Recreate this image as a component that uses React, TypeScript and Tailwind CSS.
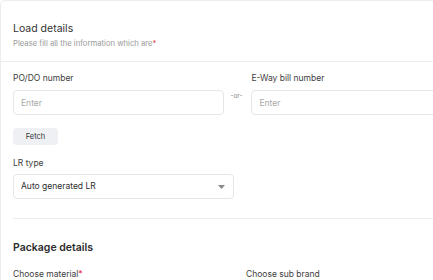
function Label({ text, required }: { text: string; required?: boolean }) {
  return (
    <div className="text-[8.5px] leading-[12px] text-[#3d3d3d]">
      {text}
      {required && <span className="text-[#e5383b]">*</span>}
    </div>
  );
}

export default function App() {
  return (
    <div className="w-[433px] h-[280px] overflow-hidden bg-white" style={{ fontFamily: "Inter, sans-serif" }}>
      <div className="w-[480px] border border-[#ececec] rounded-tl-[5px]">
        <div className="px-3 pt-[21px] pb-[11px] border-b border-[#ececec]">
          <h1 className="text-[10.5px] leading-[14px] text-[#333]">Load details</h1>
          <p className="mt-[2px] text-[7.7px] leading-[12px] text-[#9a9a9a]">
            Please fill all the information which are<span className="text-[#e5383b]">*</span>
          </p>
        </div>

        <div className="px-3 pt-[10px]">
          <div className="flex items-start">
            <div className="w-[213px]">
              <Label text="PO/DO number" />
              <input
                placeholder="Enter"
                className="mt-[6px] w-full h-[25px] px-[7px] rounded-[4px] border border-[#e6e6e6] text-[8.5px] placeholder:text-[#a8a8a8] outline-none"
              />
            </div>
            <div className="w-[26px] pt-[19px] text-center text-[6.5px] leading-[10px] text-[#888]">-or-</div>
            <div className="w-[220px] pl-[2px]">
              <Label text="E-Way bill number" />
              <input
                placeholder="Enter"
                className="mt-[6px] w-full h-[25px] px-[7px] rounded-[4px] border border-[#e6e6e6] text-[8.5px] placeholder:text-[#a8a8a8] outline-none"
              />
            </div>
          </div>

          <button className="mt-[13px] w-[45px] h-[17px] rounded-[4px] bg-[#eef0f3] text-[7.5px] text-[#333]">Fetch</button>

          <div className="mt-[12px] grid grid-cols-2 gap-x-3">
            <div>
              <Label text="LR type" />
              <div className="mt-[5px] h-[25px] flex items-center justify-between pl-[7px] pr-[8px] rounded-[4px] border border-[#e6e6e6]">
                <span className="text-[8.5px] text-[#2e2e2e]">Auto generated LR</span>
                <svg width="7" height="4" viewBox="0 0 7 4"><path d="M0 0h7L3.5 4z" fill="#8a8a8a" /></svg>
              </div>
            </div>
          </div>

          <div className="mt-[19px] border-t border-[#ececec]" />

          <h2 className="mt-[22px] text-[10.5px] leading-[14px] font-semibold text-[#2b2b2b]">Package details</h2>

          <div className="mt-[13px] grid grid-cols-2 gap-x-3">
            <Label text="Choose material" required />
            <Label text="Choose sub brand" />
          </div>
        </div>
      </div>
    </div>
  );
}
